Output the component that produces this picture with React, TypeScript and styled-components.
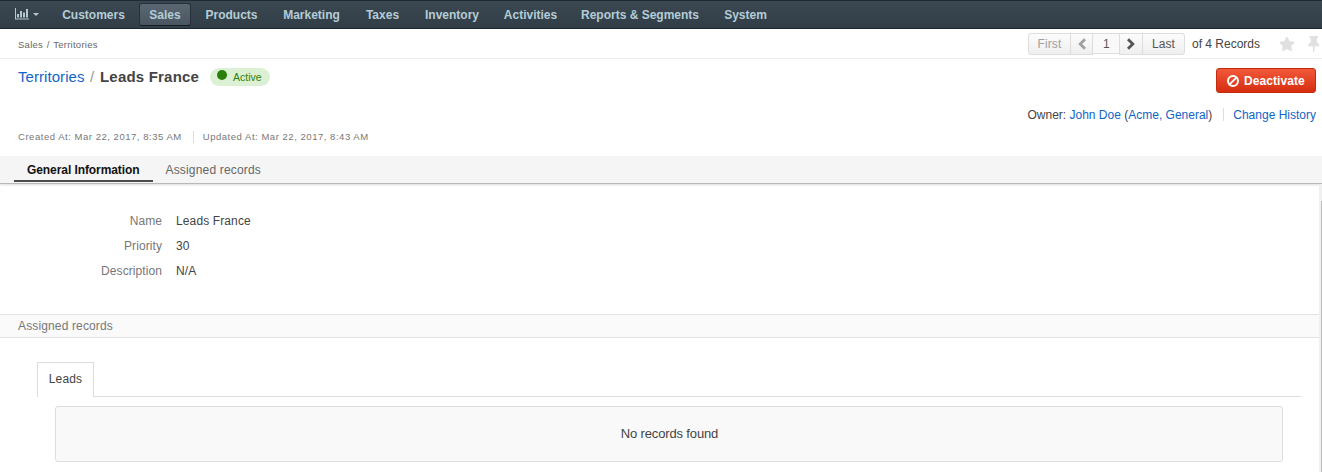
import React from 'react';
import styled, { createGlobalStyle, css } from 'styled-components';
import { FaStar } from 'react-icons/fa';

const GlobalStyle = createGlobalStyle`
  * { box-sizing: border-box; }
  body {
    margin: 0;
    background: #fff;
    color: #444;
    font: 12px/16px "Liberation Sans", Arial, sans-serif;
    white-space: nowrap;
    overflow: hidden;
  }
`;

const Page = styled.div`
  display: flex;
  flex-direction: column;
  height: 472px;
  overflow: hidden;
`;

const Nav = styled.nav`
  display: flex;
  align-items: flex-start;
  height: 29px;
  padding: 2px 0 0 4px;
  border-top: 1px solid #1e2b35;
  border-bottom: 1px solid #1b252d;
  background: linear-gradient(#3c4851, #313e47);
`;

const Dashboard = styled.a`
  display: flex;
  align-items: center;
  gap: 4px;
  width: 47px;
  height: 22px;
  padding-left: 11px;
  color: #b4c8d2;
`;

const Caret = styled.span`
  border: 3px solid transparent;
  border-top-color: currentColor;
  border-bottom: 0;
`;

const NavItem = styled.a<{ $width: number; $active?: boolean }>`
  width: ${p => p.$width}px;
  height: 23px;
  margin-right: 3px;
  border: 1px solid transparent;
  border-radius: 3px;
  color: #b4ccd6;
  font-weight: bold;
  line-height: 22px;
  text-align: center;
  ${p => p.$active && css`
    border-color: #25303a;
    border-bottom-color: #151d24;
    background: linear-gradient(#5b6873, #495661);
  `}
`;

const TopBar = styled.div`
  display: flex;
  align-items: center;
  justify-content: space-between;
  height: 30px;
  padding-left: 18px;
  border-bottom: 1px solid #eee;
`;

const Crumbs = styled.div`
  padding-top: 2px;
  font-size: 9.5px;
  color: #686868;
  letter-spacing: 0.26px;
  word-spacing: 0.8px;
`;

const PagerArea = styled.div`
  display: flex;
  align-items: center;
  height: 29px;
`;

const Pager = styled.div`
  display: flex;
  height: 22px;
  margin-right: 7px;
`;

const PageButton = styled.button<{ $width: number; $disabled?: boolean; $field?: boolean }>`
  display: flex;
  align-items: center;
  justify-content: center;
  width: ${p => p.$width}px;
  height: ${p => (p.$field ? 21 : 22)}px;
  margin-left: -1px;
  padding: ${p => (p.$field ? '2px 0 0 1px' : '0')};
  border: 1px solid #ddd;
  background: ${p => (p.$field ? '#f9f9f9' : 'linear-gradient(#fcfcfc, #efefef)')};
  color: ${p => (p.$disabled ? '#a0a0a0' : '#555')};
  font: inherit;
  letter-spacing: 0.1px;
  &:first-child { margin-left: 0; border-radius: 3px 0 0 3px; }
  &:last-child { border-radius: 0 3px 3px 0; }
`;

const RecordCount = styled.span`
  width: 87px;
`;

const PageTools = styled.div`
  display: flex;
  align-items: center;
  gap: 12px;
  width: 43px;
  overflow: hidden;
  color: #e0e0e0;
  svg { flex: none; }
`;

const Header = styled.header`
  display: flex;
  justify-content: space-between;
  height: 97px;
  padding: 9px 6px 0 18px;
`;

const HeaderColumn = styled.div<{ $end?: boolean }>`
  display: flex;
  flex-direction: column;
  align-items: ${p => (p.$end ? 'flex-end' : 'flex-start')};
`;

const Title = styled.h1`
  display: flex;
  align-items: center;
  height: 18px;
  margin: 0;
  font-size: 15px;
  font-weight: normal;
`;

const TitleLink = styled.a`
  width: 72px;
  color: #1065c8;
  letter-spacing: 0.06px;
`;

const Slash = styled.span`
  width: 10px;
  color: #999;
`;

const TitleName = styled.strong`
  width: 110px;
  color: #444;
  letter-spacing: 0.2px;
`;

const Status = styled.span`
  display: flex;
  align-items: center;
  width: 60px;
  height: 18px;
  padding-left: 7px;
  border-radius: 9px;
  background: #dcf0d3;
  color: #2b800c;
  font-size: 10.5px;
`;

const Dot = styled.i`
  width: 10px;
  height: 10px;
  margin: -4px 6px 0 0;
  border-radius: 50%;
  background: #2b800c;
`;

const Dates = styled.div`
  display: flex;
  height: 12px;
  margin-top: 45px;
  color: #777;
  font-size: 9.5px;
  line-height: 12px;
  letter-spacing: 0.53px;
`;

const Stamp = styled.span`
  & + & {
    margin-left: 11px;
    padding-left: 9px;
    border-left: 1px solid #ddd;
  }
`;

const DangerButton = styled.button`
  display: flex;
  align-items: center;
  gap: 5px;
  width: 100px;
  height: 25px;
  padding: 0 0 0 10px;
  border: 1px solid #c42b0d;
  border-radius: 3px;
  background: linear-gradient(#f2583a, #d62e10);
  color: #fff;
  font: bold 12px/16px "Liberation Sans", Arial, sans-serif;
  letter-spacing: 0.07px;
`;

const OwnerLine = styled.div`
  display: flex;
  margin-top: 14px;
`;

const Link = styled.a`
  color: #1065c8;
`;

const History = styled(Link)`
  height: 13px;
  margin: 1px 0 0 11px;
  padding-left: 9px;
  border-left: 1px solid #ddd;
  line-height: 14px;
`;

const Tabs = styled.div`
  display: flex;
  height: 28px;
  flex: none;
  padding-left: 14px;
  border-bottom: 1px solid #b9b9b9;
  background: #f5f5f5;
  box-shadow: 0 1px 2px #ddd;
`;

const Tab = styled.a<{ $active?: boolean }>`
  height: 26px;
  padding: 0 13px;
  border-bottom: 2px solid ${p => (p.$active ? '#4c4c4c' : 'transparent')};
  color: ${p => (p.$active ? '#111' : '#666')};
  font-weight: ${p => (p.$active ? 'bold' : 'normal')};
  line-height: 28px;
  letter-spacing: ${p => (p.$active ? -0.08 : 0.17)}px;
`;

const Body = styled.div`
  display: flex;
  flex: 1;
  padding-top: 1px;
`;

const Content = styled.main`
  flex: 1;
`;

const Scrollbar = styled.div`
  width: 3px;
  padding: 16px 0 0 2px;
  background: #f0f0f0;
`;

const Thumb = styled.div`
  height: 100%;
  background: #bcbcbc;
`;

const Fields = styled.dl`
  display: grid;
  grid-template-columns: 162px 1fr;
  column-gap: 14px;
  grid-auto-rows: 25px;
  align-items: center;
  height: 129px;
  margin: 0;
  padding-top: 23px;
`;

const Label = styled.dt`
  color: #777;
  text-align: right;
  letter-spacing: 0.08px;
`;

const Value = styled.dd`
  margin: 0;
  letter-spacing: 0.12px;
`;

const SectionTitle = styled.h2`
  height: 24px;
  margin: 0;
  padding-left: 18px;
  border: solid #e3e3e3;
  border-width: 1px 0;
  background: #fafafa;
  color: #777;
  font-size: 12px;
  font-weight: normal;
  line-height: 23px;
  letter-spacing: 0.14px;
`;

const SubTabs = styled.div`
  display: flex;
  height: 35px;
  margin: 24px 18px 0 37px;
`;

const SubTab = styled.a`
  width: 57px;
  border: 1px solid #ddd;
  border-bottom: 0;
  line-height: 33px;
  text-align: center;
  letter-spacing: 0.15px;
`;

const SubTabRule = styled.div`
  flex: 1;
  border-bottom: 1px solid #ddd;
`;

const EmptyBox = styled.div`
  height: 56px;
  margin: 9px 36px 0 55px;
  padding-left: 1px;
  border: 1px solid #ddd;
  border-radius: 3px;
  background: #f9f9f9;
  font-size: 13px;
  line-height: 54px;
  text-align: center;
  letter-spacing: -0.15px;
`;

const ChartIcon = () => (
  <svg width="14" height="12" viewBox="0 0 14 12" fill="currentColor">
    <path d="M0 0h1v10.500h13v1H0zM2 6h2v3.500h-2zM5 3h2v6.500h-2zM8 4.500h2v5h-2zM11 1h2v8.500h-2z" />
  </svg>
);

const Chevron = ({ right }: { right?: boolean }) => (
  <svg width="10" height="12" viewBox="0 0 10 12" fill="none" stroke="currentColor" strokeWidth="2.8">
    <path d={right ? 'M2 1.200 6.800 6 2 10.800' : 'M8 1.200 3.200 6 8 10.800'} />
  </svg>
);

const BanIcon = () => (
  <svg width="12" height="12" viewBox="0 0 12 12" fill="none" stroke="currentColor" strokeWidth="2">
    <circle cx="6" cy="6" r="5" />
    <path d="M2.600 9.400 9.400 2.600" />
  </svg>
);

const PinIcon = () => (
  <svg width="13" height="16" viewBox="0 0 13 16" fill="currentColor">
    <path d="M2.500 0h8.500v2h-1.200v4.500c1.800.6 2.700 1.900 2.700 3.700H7.700L7.200 16H6.200L5.700 10.200H1c0-1.800.9-3.100 2.700-3.700V2H2.500z" />
  </svg>
);

const NAV_ITEMS = [
  { label: 'Customers', width: 85 },
  { label: 'Sales', width: 52, active: true },
  { label: 'Products', width: 75 },
  { label: 'Marketing', width: 79 },
  { label: 'Taxes', width: 57 },
  { label: 'Inventory', width: 76 },
  { label: 'Activities', width: 75 },
  { label: 'Reports & Segments', width: 138 },
  { label: 'System', width: 67 },
];

const FIELDS = [
  ['Name', 'Leads France'],
  ['Priority', '30'],
  ['Description', 'N/A'],
];

export default function App() {
  return (
    <Page>
      <GlobalStyle />
      <Nav>
        <Dashboard><ChartIcon /><Caret /></Dashboard>
        {NAV_ITEMS.map(i => (
          <NavItem key={i.label} $width={i.width} $active={i.active}>{i.label}</NavItem>
        ))}
      </Nav>
      <TopBar>
        <Crumbs>Sales / Territories</Crumbs>
        <PagerArea>
          <Pager>
            <PageButton $width={43} $disabled>First</PageButton>
            <PageButton $width={23} $disabled><Chevron /></PageButton>
            <PageButton $width={28} $field>1</PageButton>
            <PageButton $width={24}><Chevron right /></PageButton>
            <PageButton $width={43}>Last</PageButton>
          </Pager>
          <RecordCount>of 4 Records</RecordCount>
          <PageTools><FaStar size={16} /><PinIcon /></PageTools>
        </PagerArea>
      </TopBar>
      <Header>
        <HeaderColumn>
          <Title>
            <TitleLink>Territories</TitleLink>
            <Slash>/</Slash>
            <TitleName>Leads France</TitleName>
            <Status><Dot />Active</Status>
          </Title>
          <Dates>
            <Stamp>Created At: Mar 22, 2017, 8:35 AM</Stamp>
            <Stamp>Updated At: Mar 22, 2017, 8:43 AM</Stamp>
          </Dates>
        </HeaderColumn>
        <HeaderColumn $end>
          <DangerButton><BanIcon />Deactivate</DangerButton>
          <OwnerLine>
            <span>Owner: <Link>John Doe</Link> (<Link>Acme, General</Link>)</span>
            <History>Change History</History>
          </OwnerLine>
        </HeaderColumn>
      </Header>
      <Tabs>
        <Tab $active>General Information</Tab>
        <Tab>Assigned records</Tab>
      </Tabs>
      <Body>
        <Content>
          <Fields>
            {FIELDS.map(([label, value]) => (
              <React.Fragment key={label}>
                <Label>{label}</Label>
                <Value>{value}</Value>
              </React.Fragment>
            ))}
          </Fields>
          <SectionTitle>Assigned records</SectionTitle>
          <SubTabs>
            <SubTab>Leads</SubTab>
            <SubTabRule />
          </SubTabs>
          <EmptyBox>No records found</EmptyBox>
        </Content>
        <Scrollbar><Thumb /></Scrollbar>
      </Body>
    </Page>
  );
}
